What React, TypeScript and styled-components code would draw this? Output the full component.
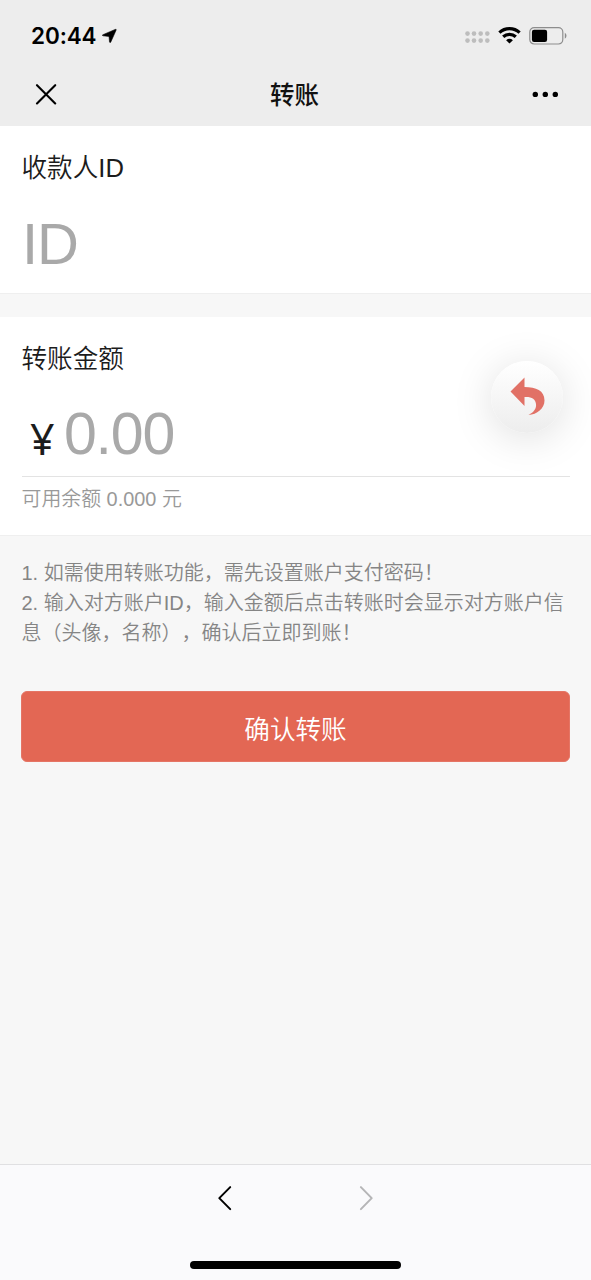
import React from 'react';
import styled, { createGlobalStyle } from 'styled-components';

const GlobalStyle = createGlobalStyle`
  * { box-sizing: border-box; }
  body {
    margin: 0;
    background: #f7f7f7;
    font-family: 'Liberation Sans', 'Noto Sans CJK SC', sans-serif;
    font-weight: 350;
    color: #1c1c1c;
    text-spacing-trim: space-all;
  }
`;

const Screen = styled.div`
  width: 591px;
  height: 1280px;
  display: flex;
  flex-direction: column;
  background: #f7f7f7;
  overflow: hidden;
`;

const Header = styled.header`
  height: 126px;
  background: #ededed;
  flex: none;
`;

const StatusBar = styled.div`
  height: 64px;
  padding: 7px 24px 0 31px;
  display: flex;
  align-items: center;
  justify-content: space-between;
`;

const StatusGroup = styled.div<{ $gap: number }>`
  display: flex;
  align-items: center;
  gap: ${(p) => p.$gap}px;
`;

const Time = styled.span`
  font: 600 22.5px/28px Inter, sans-serif;
  letter-spacing: -0.1px;
  color: #000;
`;

const NavBar = styled.div`
  height: 62px;
  padding: 0 31px 0 35px;
  display: grid;
  grid-template-columns: 24px 1fr 30px;
  align-items: center;
`;

const Title = styled.h1`
  margin: 2px 0 0;
  text-align: center;
  font-size: 24.5px;
  line-height: 36px;
  font-weight: 500;
  color: #111;
`;

const Card = styled.section<{ $height: number }>`
  height: ${(p) => p.$height}px;
  flex: none;
  padding: 23px 21px 0 22px;
  background: #fff;
  border-bottom: 1px solid #efefef;
`;

const Gap = styled.div`
  height: 23px;
  flex: none;
`;

const Label = styled.div`
  font-size: 25.6px;
  line-height: 38px;
  margin-left: -0.5px;
`;

const Placeholder = styled.div<{ $size: number }>`
  font-size: ${(p) => p.$size}px;
  line-height: 70px;
  letter-spacing: -1.2px;
  color: #a9a9a9;
`;

const IdField = styled.div`
  margin-top: 22px;
`;

const AmountField = styled.div`
  display: flex;
  height: 99px;
  padding-top: 21px;
  border-bottom: 1px solid #e3e3e3;
`;

const Currency = styled.span`
  width: 42px;
  padding-left: 8px;
  font: 43px/79px 'Noto Sans', sans-serif;
`;

const Balance = styled.div`
  font-size: 19.9px;
  line-height: 30px;
  margin: 7px 0 0 -0.5px;
  color: #999;
`;

const Tips = styled.div`
  padding: 22px 22px 0 21.5px;
  height: 155px;
  flex: none;
  font-size: 20px;
  line-height: 30px;
  color: #858585;
`;

const TipLine = styled.div`
  word-break: break-all;
`;

const Confirm = styled.button`
  flex: none;
  display: block;
  margin: 0 21px;
  height: 71px;
  border: 1px solid #e57565;
  border-radius: 6px;
  background: #e36754;
  color: #fff;
  font: 350 25.6px/38px 'Liberation Sans', 'Noto Sans CJK SC', sans-serif;
  padding: 7px 0 0;
`;

const Footer = styled.footer`
  height: 116px;
  margin-top: auto;
  flex: none;
  background: #fafafc;
  border-top: 1px solid #e0e0e2;
  display: flex;
  flex-direction: column;
  align-items: center;
  justify-content: space-between;
  padding: 19px 0 11px;
`;

const Pager = styled.div`
  display: flex;
  gap: 113px;
`;

const HomeIndicator = styled.div`
  width: 211px;
  height: 8px;
  border-radius: 4px;
  background: #000;
`;

const BackBubble = styled.div`
  position: absolute;
  left: 491px;
  top: 361px;
  width: 72px;
  height: 72px;
  border-radius: 50%;
  background: linear-gradient(#fff, #ededed);
  box-shadow: 0 5px 42px rgba(0, 0, 0, 0.13);
`;

export default function App() {
  return (
    <Screen>
      <GlobalStyle />
      <Header>
        <StatusBar>
          <StatusGroup $gap={5}>
            <Time>20:44</Time>
            <svg width="15" height="16" viewBox="0 0 16 16">
              <path d="M14 1 Q15.6 .3 15 1.9 L9.4 14.4 Q8.5 15.8 8 14.3 L7.5 8.5 L1.2 7.8 Q-.5 7.3 1 6.6Z" fill="#000" stroke="#000" strokeWidth=".6" />
            </svg>
          </StatusGroup>
          <StatusGroup $gap={8}>
            <svg width="25" height="14" viewBox="0 0 25 14" fill="#bdbdbd">
              {[2.5, 9, 15.7, 22.3].map((x) => (
                <g key={x}>
                  <circle cx={x} cy="4.6" r="2.3" />
                  <circle cx={x} cy="11.6" r="2.3" />
                </g>
              ))}
            </svg>
            <svg width="23" height="18" viewBox="0 0 23 18" fill="none" stroke="#000">
              <path d="M1.4 5.6 C7 .3 16 .3 21.6 5.6" strokeWidth="3.2" />
              <path d="M5.2 9.8 C8.800 6.500 14.200 6.500 17.800 9.800" strokeWidth="3.2" />
              <path d="M8.1 13.2 Q11.5 10.400 14.900 13.200 L11.500 16.600Z" fill="#000" stroke="none" />
            </svg>
            <svg width="38" height="18" viewBox="0 0 38 18">
              <rect x=".8" y=".6" width="33" height="16.4" rx="4.4" fill="none" stroke="#8d8d8d" strokeWidth="1.2" />
              <rect x="2.900" y="2.700" width="15.200" height="12.200" rx="2.200" fill="#000" />
              <path d="M35.8 5.800 Q37.500 6.800 37.500 8.800 T35.800 11.800Z" fill="#8d8d8d" />
            </svg>
          </StatusGroup>
        </StatusBar>
        <NavBar>
          <svg width="22" height="22" viewBox="0 0 22 22" stroke="#000" strokeWidth="2.1" strokeLinecap="round">
            <path d="M2 1.2 20.2 19.4M20.2 1.2 2 19.4" />
          </svg>
          <Title>转账</Title>
          <svg width="30" height="8" viewBox="0 0 30 8">
            <circle cx="5.3" cy="3.4" r="2.7" />
            <circle cx="15.3" cy="3.4" r="2.7" />
            <circle cx="25.3" cy="3.4" r="2.7" />
          </svg>
        </NavBar>
      </Header>
      <Card $height={168}>
        <Label>收款人ID</Label>
        <IdField>
          <Placeholder $size={58}>ID</Placeholder>
        </IdField>
      </Card>
      <Gap />
      <Card $height={219}>
        <Label>转账金额</Label>
        <AmountField>
          <Currency>¥</Currency>
          <Placeholder $size={59}>0.00</Placeholder>
        </AmountField>
        <Balance>可用余额 0.000 元</Balance>
      </Card>
      <Tips>
        <TipLine>1. 如需使用转账功能，需先设置账户支付密码！</TipLine>
        <TipLine>2. 输入对方账户ID，输入金额后点击转账时会显示对方账户信息（头像，名称），确认后立即到账！</TipLine>
      </Tips>
      <Confirm>确认转账</Confirm>
      <Footer>
        <Pager>
          <svg width="28" height="28" viewBox="0 0 28 28" fill="none" stroke="#000" strokeWidth="2" strokeLinecap="round" strokeLinejoin="round">
            <path d="M19.200 3.100 8.300 14.100 19.200 25.100" />
          </svg>
          <svg width="28" height="28" viewBox="0 0 28 28" fill="none" stroke="#b5b5b7" strokeWidth="2" strokeLinecap="round" strokeLinejoin="round">
            <path d="M8.900 3.100 19.700 14.100 8.900 25.100" />
          </svg>
        </Pager>
        <HomeIndicator />
      </Footer>
      <BackBubble>
        <svg width="72" height="72" viewBox="0 0 72 72">
          <path d="M19.5 30.5 33.5 16.5V26C45 26 53.5 29.500 53.500 39.500C53.500 47.500 46 53.500 37.500 54C43 51 45.500 47.500 45 43C44.500 38 40.500 35.500 33.500 36V45Z" fill="#e17166" />
        </svg>
      </BackBubble>
    </Screen>
  );
}
